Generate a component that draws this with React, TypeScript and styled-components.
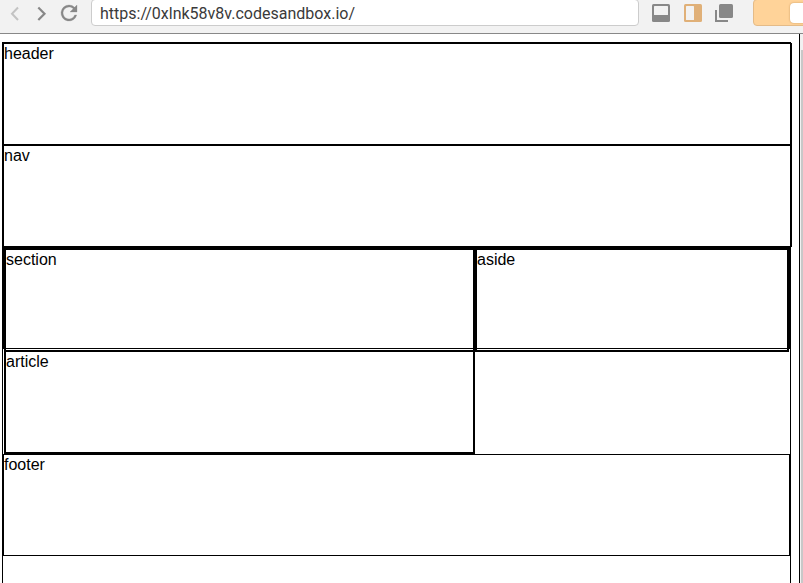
import React from 'react';
import styled, { createGlobalStyle } from 'styled-components';

const GlobalStyle = createGlobalStyle`
  html, body, #root { height: 100%; }
  body {
    margin: 0;
    overflow: hidden;
    background: #fff;
    color: #000;
    font-family: "Liberation Sans", Arial, sans-serif;
    font-size: 16px;
  }
`;

const Browser = styled.div`
  display: flex;
  flex-direction: column;
  height: 583px;
  width: 803px;
  overflow: hidden;
`;

const Toolbar = styled.div`
  box-sizing: border-box;
  display: flex;
  align-items: flex-start;
  flex: none;
  height: 34px;
  background: #f2f2f2;
  border-bottom: 1px solid #888;
`;

const NavIcons = styled.div`
  display: flex;
  flex: none;
  width: 91px;
  height: 27px;
`;

const AddressBar = styled.div`
  box-sizing: border-box;
  flex: none;
  width: 548px;
  height: 27px;
  margin-top: -1px;
  padding-left: 8px;
  border: 1px solid #ccc;
  border-radius: 4px;
  background: #fff;
  color: #3a3a3a;
  font: 16px/27px Roboto, sans-serif;
`;

const ViewIcons = styled.div`
  display: flex;
  flex: none;
  width: 114px;
  height: 27px;
`;

const Toggle = styled.div`
  box-sizing: border-box;
  flex: none;
  width: 70px;
  height: 27px;
  margin-top: -1px;
  padding: 3px 0 0 36px;
  border: 1px solid #e4bb88;
  border-radius: 4px;
  background: #ffd399;
`;

const Knob = styled.div`
  width: 40px;
  height: 20px;
  border-radius: 4px;
  background: #fff;
  box-shadow: 0 0 2px rgba(120, 70, 10, 0.45);
`;

const Viewport = styled.div`
  display: flex;
  flex: 1;
  min-height: 0;
`;

const Page = styled.div`
  box-sizing: border-box;
  flex: none;
  width: 800px;
  padding: 8px 0 0 2px;
  overflow: hidden;
  border-right: 1px solid #000;
`;

const Scrollbar = styled.div`
  box-sizing: border-box;
  flex: 1;
  padding: 16px 0 0 1px;
  background: #f1f1f1;
`;

const Thumb = styled.div`
  height: 100%;
  background: #c8c8c8;
`;

const Container = styled.div`
  width: 787px;
  height: 900px;
  border: 1px solid #000;
`;

const Block = styled.div<{ $full?: boolean }>`
  box-sizing: content-box;
  width: ${({ $full }) => ($full ? '100%' : 'auto')};
  height: 100px;
  border: 1px solid #000;
  line-height: 20px;
`;

const Columns = styled.div`
  display: flex;
  align-items: flex-start;
  height: 100px;
  margin-bottom: 105px;
  border: 1px solid #000;
`;

const Column = styled.div<{ $width: number }>`
  box-sizing: border-box;
  flex: none;
  width: ${({ $width }) => $width}%;
  border: 1px solid #000;
`;

export default function App() {
  return (
    <>
      <GlobalStyle />
      <Browser>
        <Toolbar>
          <NavIcons>
            <svg width="91" height="27" viewBox="0 0 91 27">
              <path d="M18 7.5L12 13.7L18 20" fill="none" stroke="#c3c3c3" strokeWidth="2" />
              <path d="M38.3 7.5L44.5 13.7L38.3 20" fill="none" stroke="#888" strokeWidth="2.2" />
              <path
                transform="translate(57 1)"
                d="M17.65 6.35A7.96 7.96 0 0 0 12 4a8 8 0 1 0 7.73 10h-2.08A6 6 0 1 1 12 6c1.66 0 3.14.69 4.22 1.78L13 11h7V4l-2.35 2.35z"
                fill="#888"
                stroke="#888"
                strokeWidth="0.3"
              />
            </svg>
          </NavIcons>
          <AddressBar>https://0xlnk58v8v.codesandbox.io/</AddressBar>
          <ViewIcons>
            <svg width="114" height="27" viewBox="0 0 114 27">
              <rect x="13" y="4" width="18" height="18" rx="1.5" fill="#888" />
              <rect x="15" y="6" width="14" height="9" rx="0.5" fill="#f2f2f2" />
              <rect x="45" y="4" width="18" height="18" rx="1.5" fill="#e0b078" />
              <rect x="47" y="6" width="8" height="14" rx="0.5" fill="#f2f2f2" />
              <path d="M77 10V21H89" fill="none" stroke="#888" strokeWidth="2" />
              <rect x="80" y="4" width="14" height="14" rx="1.5" fill="#888" />
            </svg>
          </ViewIcons>
          <Toggle>
            <Knob />
          </Toggle>
        </Toolbar>
        <Viewport>
          <Page>
            <Container>
              <Block as="header" $full>header</Block>
              <Block as="nav" $full>nav</Block>
              <Columns>
                <Column $width={60}>
                  <Block as="section">section</Block>
                  <Block as="article">article</Block>
                </Column>
                <Column $width={40}>
                  <Block as="aside">aside</Block>
                </Column>
              </Columns>
              <Block as="footer">footer</Block>
            </Container>
          </Page>
          <Scrollbar>
            <Thumb />
          </Scrollbar>
        </Viewport>
      </Browser>
    </>
  );
}
